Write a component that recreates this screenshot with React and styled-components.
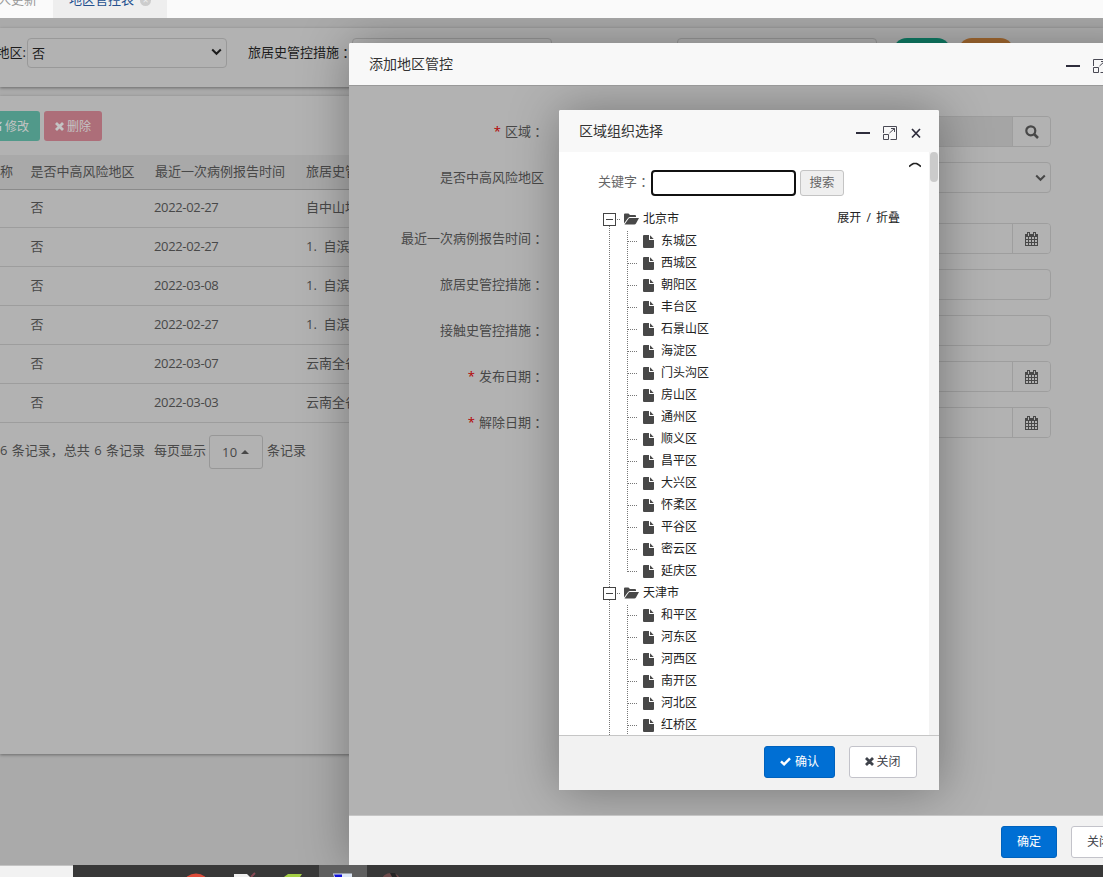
import React from 'react';
import styled, { createGlobalStyle, css } from 'styled-components';

const Global = createGlobalStyle`
  * { box-sizing: border-box; }
  html, body { margin: 0; padding: 0; overflow: hidden; }
  body {
    font-family: "Open Sans", "Noto Sans CJK SC", sans-serif;
    font-size: 13px;
    color: #484848;
  }
`;

const Screen = styled.div`
  width: 1103px;
  height: 877px;
  overflow: hidden;
  display: flex;
  flex-direction: column;
  white-space: nowrap;
`;

/* ---------- tab strip ---------- */
const TabStrip = styled.div`
  height: 18px;
  flex: none;
  display: flex;
  background: #fafafa;
  overflow: hidden;
`;
const Tab = styled.div`
  display: flex;
  align-items: center;
  gap: 6px;
  width: ${(p) => p.$width}px;
  height: 17px;
  padding-left: ${(p) => p.$pad}px;
  padding-bottom: 37px;
  line-height: 16px;
  color: ${(p) => (p.$active ? '#23508e' : '#999')};
  background: ${(p) => (p.$active ? '#eeeeee' : 'transparent')};
`;
const TabName = styled.span`
  margin-top: -3px;
  margin-left: ${(p) => p.$shift || 0}px;
`;
const TabClose = styled.span`
  width: 11px;
  height: 11px;
  border-radius: 50%;
  background: #ccc;
  color: #eee;
  font-size: 10px;
  line-height: 10px;
  text-align: center;
`;

/* ---------- page behind the dialogs ---------- */
const Viewport = styled.div`
  position: relative;
  height: 847px;
  flex: none;
  overflow: hidden;
  background: #aaa;
`;
const Panel = styled.div`
  background: #b2b2b2;
  box-shadow: 0 1px 3px rgba(0, 0, 0, 0.38);
  overflow: hidden;
`;
const SearchPanel = styled(Panel)`
  margin-top: 10px;
  height: 59px;
  display: flex;
  align-items: flex-start;
  padding-top: 10px;
`;
const SearchLabel = styled.span`
  width: ${(p) => p.$width}px;
  padding-right: ${(p) => p.$right || 0}px;
  flex: none;
  display: flex;
  justify-content: flex-end;
  line-height: 29px;
  color: #1c1c1c;
`;
const Field = styled.div`
  width: 200px;
  height: 30px;
  flex: none;
  margin-right: ${(p) => p.$gap || 0}px;
  padding: 0 4px 2px 4px;
  display: flex;
  align-items: center;
  justify-content: space-between;
  border: 1px solid #999;
  border-radius: 4px;
  color: #1c1c1c;
`;
const Pill = styled.div`
  width: ${(p) => p.$width}px;
  height: 28px;
  flex: none;
  margin-right: 7px;
  border-radius: 14px;
  background: ${(p) => p.$color};
`;
const TablePanel = styled(Panel)`
  margin-top: 9px;
  height: 658px;
`;
const Toolbar = styled.div`
  display: flex;
  gap: 4px;
  margin-left: -33px;
  padding-top: 15px;
  height: 59px;
`;
const ToolButton = styled.div`
  width: ${(p) => p.$width}px;
  height: 30px;
  display: flex;
  align-items: center;
  justify-content: flex-end;
  gap: 3px;
  padding-right: 11px;
  border-radius: 3px;
  font-size: 12px;
  color: #c4c4c4;
  background: ${(p) => p.$color};
`;
const Row = styled.div`
  display: grid;
  grid-template-columns: 30px 124px 152px 200px;
  height: ${(p) => (p.$head ? 35 : 39)}px;
  line-height: ${(p) => (p.$head ? 33 : 37)}px;
  border-bottom: 1px solid ${(p) => (p.$head ? '#8a8a8a' : '#9d9d9d')};
  background: ${(p) => (p.$head ? '#a9a9a9' : 'transparent')};
  white-space: pre;
  span:nth-child(2) { padding-left: 0.5px; }
  span:nth-child(3) { letter-spacing: ${(p) => (p.$head ? '0' : '-0.34px')}; padding-left: ${(p) => (p.$head ? 1 : 0)}px; }
`;
const Rows = styled.div`
  margin-top: -1px;
`;
const Pager = styled.div`
  display: flex;
  align-items: flex-start;
  padding-top: 12px;
  line-height: 30px;
`;
const PagerText = styled.span`
  width: ${(p) => p.$width}px;
  word-spacing: ${(p) => p.$spacing || 0}px;
`;
const PageSize = styled.div`
  width: 54px;
  height: 34px;
  margin-right: 4px;
  display: flex;
  align-items: center;
  gap: 4px;
  padding-left: 12px;
  border: 1px solid #979797;
  border-radius: 3px;
  letter-spacing: 0.2px;
  &::after {
    content: '';
    border: 4px solid transparent;
    border-top: 0;
    border-bottom-color: #484848;
  }
`;

/* ---------- dialogs ---------- */
const Dialog = styled.div`
  position: absolute;
  left: ${(p) => p.$x}px;
  top: ${(p) => p.$y}px;
  width: ${(p) => p.$w}px;
  height: ${(p) => p.$h}px;
  display: flex;
  flex-direction: column;
  border-radius: 2px;
  box-shadow: 1px 1px 50px rgba(0, 0, 0, 0.34);
  background: #fff;
`;
const TitleBar = styled.div`
  height: 42px;
  flex: none;
  display: flex;
  align-items: center;
  justify-content: space-between;
  padding: 0 17px 0 20px;
  background: #f8f8f8;
  font-size: 14px;
  line-height: 40px;
  color: #333;
  border-radius: 2px 2px 0 0;
`;
const TitleActions = styled.div`
  display: flex;
  align-items: center;
  padding-top: 4px;
`;
const Footer = styled.div`
  height: ${(p) => p.$h}px;
  flex: none;
  display: flex;
  justify-content: flex-end;
  gap: 14px;
  padding: 10px ${(p) => p.$right}px 0 0;
  background: #f2f2f2;
  border-top: 1px solid #c6c6c6;
`;
const Button = styled.div`
  width: ${(p) => p.$w}px;
  height: 32px;
  flex: none;
  display: flex;
  align-items: center;
  justify-content: center;
  gap: ${(p) => p.$gap || 0}px;
  font-size: 12px;
  line-height: 29px;
  padding-bottom: 1px;
  border-radius: 3px;
  ${(p) =>
    p.$primary
      ? css`background: #006fd4; border: 1px solid #0062bd; color: #fff;`
      : css`background: #fff; border: 1px solid #c3c3ca; color: #3f434b;`}
`;
const FormBody = styled.div`
  position: relative;
  flex: 1;
  overflow: hidden;
  padding-top: 30px;
  background: #b2b2b2;
  border-top: 1px solid #999;
`;
const FormRow = styled.div`
  display: flex;
  height: 31px;
  margin-bottom: ${(p) => p.$after || 15}px;
  line-height: 31px;
`;
const FormLabel = styled.div`
  width: 196px;
  margin-right: 15px;
  padding-right: 1px;
  display: flex;
  justify-content: flex-end;
  i { color: #b20000; font-style: normal; margin-right: 4px; }
`;
const Centered = styled.span`
  font-family: "Noto Sans CJK TC", sans-serif;
`;
const FormInput = styled.div`
  width: 491px;
  display: flex;
  align-items: stretch;
  justify-content: flex-end;
  border: 1px solid #9e9e9e;
  border-radius: 4px;
  overflow: hidden;
  background: ${(p) => (p.$disabled ? '#a5a5a5' : 'transparent')};
`;
const Addon = styled.div`
  width: ${(p) => (p.$plain ? 19 : 38)}px;
  display: flex;
  align-items: center;
  justify-content: center;
  background: ${(p) => (p.$plain ? 'transparent' : '#b2b2b2')};
  border-left: ${(p) => (p.$plain ? 0 : 1)}px solid #9e9e9e;
  padding-right: ${(p) => (p.$plain ? 1 : 0)}px;
`;

/* ---------- region tree ---------- */
const TreeBody = styled.div`
  flex: 1;
  display: flex;
  overflow: hidden;
`;
const TreeMain = styled.div`
  flex: 1;
  overflow: hidden;
`;
const Scrollbar = styled.div`
  width: 10px;
  padding: 0 1px;
  background: #f3f3f3;
  &::before {
    content: '';
    display: block;
    height: 30px;
    border-radius: 4px;
    background: #cbcbcb;
  }
`;
const Keyword = styled.div`
  display: flex;
  align-items: flex-start;
  height: 56px;
  padding: 18px 8px 0 39px;
  line-height: 23px;
  color: #666;
`;
const KeywordInput = styled.div`
  width: 145px;
  height: 26px;
  margin: 0 4px 0 1px;
  border: 2px solid #111;
  border-radius: 4px;
`;
const SearchButton = styled.div`
  width: 44px;
  height: 26px;
  border: 1px solid #c4c4c4;
  border-radius: 3px;
  background: #efefef;
  text-align: center;
  font-size: 12.5px;
`;
const Collapse = styled.svg`
  margin: -9px 0 0 auto;
`;
const dotsV = css`repeating-linear-gradient(to bottom, #777 0 1px, transparent 1px 2px)`;
const dotsH = css`repeating-linear-gradient(to right, #777 0 1px, transparent 1px 2px)`;
const TreeColumns = styled.div`
  display: flex;
  justify-content: space-between;
  padding: 0 29px 0 44px;
  font-size: 12px;
  color: #222;
`;
const Branch = styled.div`
  background: ${dotsV} 6px ${(p) => (p.$first ? 12 : 0)}px / 1px 100% no-repeat;
`;
const BranchHead = styled.div`
  height: 22px;
  display: flex;
  align-items: center;
  line-height: 20px;
`;
const Toggle = styled.div`
  width: 13px;
  height: 13px;
  border: 1px solid #444;
  background: linear-gradient(#444, #444) 2px 5px / 7px 1px no-repeat #fff;
`;
const Dash = styled.div`
  width: ${(p) => p.$w}px;
  height: 1px;
  margin: 0 ${(p) => p.$right}px 0 1px;
  background: ${dotsH};
`;
const BranchIcon = styled.svg`
  margin-right: ${(p) => p.$right}px;
  flex: none;
`;
const Leaf = styled.div`
  height: 22px;
  margin-left: 24px;
  display: flex;
  align-items: center;
  line-height: 20px;
  background: ${dotsV} 0 1px / 1px ${(p) => (p.$last ? '11px' : '100%')} no-repeat;
`;
const Text = styled.span`
  height: 22px;
  line-height: 20px;
  word-spacing: 2px;
`;

/* ---------- taskbar ---------- */
const Taskbar = styled.div`
  height: 12px;
  display: flex;
  background: #383838;
`;
const StatusCorner = styled.div`
  width: 73px;
  background: #f2f2f2;
  border-top: 1px solid #c4c4c4;
`;

const Chevron = ({ color }) => (
  <svg width="11" height="8" viewBox="0 0 11 8"><path d="M1.2 1.500 5.500 5.800 9.800 1.500" fill="none" stroke={color} strokeWidth="2" /></svg>
);
const Cross = () => (
  <svg width="9" height="9" viewBox="0 0 9 9"><path d="M1 1 8 8M8 1 1 8" stroke="currentColor" strokeWidth="2.8" /></svg>
);
const Pencil = () => (
  <svg width="10" height="10" viewBox="0 0 10 10"><path d="M0 2h5M8.500 5v4.500H.5V2M4 6.500 9.500 1" fill="none" stroke="currentColor" strokeWidth="1.5" /></svg>
);
const Check = () => (
  <svg width="11" height="9" viewBox="0 0 11 9"><path d="M1 4.300 4.100 7.300 10 1.400" fill="none" stroke="currentColor" strokeWidth="2.5" /></svg>
);
const Magnifier = () => (
  <svg width="14" height="14" viewBox="0 0 14 14"><circle cx="5.8" cy="5.8" r="4.5" fill="none" stroke="#484848" strokeWidth="2.2" /><path d="m9 9 4 4" stroke="#484848" strokeWidth="2.5" /></svg>
);
const Calendar = () => (
  <svg width="13" height="14" viewBox="0 0 13 14">
    <path d="M0 2h13v12H0z" fill="#484848" />
    <path d="M2 0h3v4H2zM8 0h3v4H8z" fill="#484848" />
    <path d="M3 1h1v3H3zM9 1h1v3H9zM1 5h2v2H1zM4 5h2v2H4zM7 5h2v2H7zM10 5h2v2h-2zM1 8h2v2H1zM4 8h2v2H4zM7 8h2v2H7zM10 8h2v2h-2zM1 11h2v2H1zM4 11h2v2H4zM7 11h2v2H7zM10 11h2v2h-2z" fill="#b2b2b2" />
  </svg>
);
const WindowIcons = () => (
  <svg width="66" height="14" viewBox="0 0 66 14" fill="none" stroke="#4a4a55">
    <path d="M0 7h14" strokeWidth="2" stroke="#2e2d3c" />
    <path d="M27.500 7V.5h13v13h-6M27.500 8.500h5v5h-5zM33.500 7 38.500 2.500M35 2.500h3.500V6" />
    <path d="m56 3 8 8.500M64 3 56 11.500" strokeWidth="1.700" stroke="#2e2d3c" />
  </svg>
);
const Folder = () => (
  <BranchIcon $right={4} width="15" height="12" viewBox="0 0 15 12">
    <path d="M0 10.500V1.500Q0 .5 1 .5h3.500L6 2h5q1 0 1 1v1H5.800Q4.500 4 3.700 5.500Z" fill="#484848" />
    <path d="M.5 11.500 4.200 6.300Q4.800 5 6 5h9l-3 5.500q-.5 1-1.700 1Z" fill="#484848" />
  </BranchIcon>
);
const File = () => (
  <BranchIcon $right={7} width="11" height="13" viewBox="0 0 11 13">
    <path d="M0 1Q0 0 1 0h5v5h5v7q0 1-1 1H1q-1 0-1-1Z" fill="#484848" />
    <path d="M7 .3 10.700 4H7Z" fill="#484848" />
  </BranchIcon>
);

const rows = [
  ['', '否', '2022-02-27', '自中山地区'],
  ['', '否', '2022-02-27', '1.  自滨'],
  ['', '否', '2022-03-08', '1.  自滨'],
  ['', '否', '2022-02-27', '1.  自滨'],
  ['', '否', '2022-03-07', '云南全省'],
  ['', '否', '2022-03-03', '云南全省'],
];
const fields = [
  { label: '区域', colon: true, required: true, disabled: true, addon: 'search' },
  { label: '是否中高风险地区', addon: 'select', after: 30 },
  { label: '最近一次病例报告时间', colon: true, addon: 'date' },
  { label: '旅居史管控措施', colon: true },
  { label: '接触史管控措施', colon: true },
  { label: '发布日期', colon: true, required: true, addon: 'date' },
  { label: '解除日期', colon: true, required: true, addon: 'date' },
];
const regions = [
  { name: '北京市', items: ['东城区', '西城区', '朝阳区', '丰台区', '石景山区', '海淀区', '门头沟区', '房山区', '通州区', '顺义区', '昌平区', '大兴区', '怀柔区', '平谷区', '密云区', '延庆区'] },
  { name: '天津市', items: ['和平区', '河东区', '河西区', '南开区', '河北区', '红桥区'], more: true },
];
const addons = { search: <Magnifier />, select: <Chevron color="#484848" />, date: <Calendar /> };

const RegionPicker = () => (
  <Dialog $x={210} $y={24} $w={380} $h={680}>
    <TitleBar>
      <span>区域组织选择</span>
      <TitleActions><WindowIcons /></TitleActions>
    </TitleBar>
    <TreeBody>
      <TreeMain>
        <Keyword>
          关键字<Centered>：</Centered>
          <KeywordInput />
          <SearchButton>搜索</SearchButton>
          <Collapse width="12" height="7" viewBox="0 0 12 7"><path d="M0 5.500 2.800 3.400 4.500 2.500h3l1.700.9L12 5.500" fill="none" stroke="#222" strokeWidth="1.7" /></Collapse>
        </Keyword>
        <TreeColumns>
          <div>
            {regions.map((r, k) => (
              <Branch key={r.name} $first={k === 0}>
                <BranchHead><Toggle /><Dash $w={4} $right={3} /><Folder />{r.name}</BranchHead>
                {r.items.map((n, i) => (
                  <Leaf key={n} $last={!r.more && i === r.items.length - 1}><Dash $w={10} $right={5} /><File />{n}</Leaf>
                ))}
              </Branch>
            ))}
          </div>
          <Text>展开 / 折叠</Text>
        </TreeColumns>
      </TreeMain>
      <Scrollbar />
    </TreeBody>
    <Footer $h={55} $right={22}>
      <Button $primary $w={71} $gap={4}><Check />确认</Button>
      <Button $w={68} $gap={2}><Cross />关闭</Button>
    </Footer>
  </Dialog>
);

export default function App() {
  return (
    <>
      <Global />
      <Screen>
        <TabStrip>
          <Tab $width={53} $pad={0}><TabName $shift={-2}>人更新</TabName></Tab>
          <Tab $width={114} $pad={16} $active><TabName>地区管控表</TabName><TabClose>×</TabClose></Tab>
        </TabStrip>
        <Viewport>
          <SearchPanel>
            <SearchLabel $width={27} $right={1}>地区:</SearchLabel>
            <Field $gap={21}>否<Chevron color="#1c1c1c" /></Field>
            <SearchLabel $width={104}>旅居史管控措施<Centered>：</Centered></SearchLabel>
            <Field $gap={125} />
            <Field $gap={16} />
            <Pill $width={58} $color="#0f7d66" />
            <Pill $width={56} $color="#a56a31" />
          </SearchPanel>
          <TablePanel>
            <Toolbar>
              <ToolButton $width={73} $color="#51998a"><Pencil />修改</ToolButton>
              <ToolButton $width={58} $color="#ad6e79"><Cross />删除</ToolButton>
            </Toolbar>
            <Row $head>
              <span>称</span><span>是否中高风险地区</span><span>最近一次病例报告时间</span><span>旅居史管控措施</span>
            </Row>
            <Rows>
              {rows.map((r, i) => (
                <Row key={i}>{r.map((c, j) => <span key={j}>{c}</span>)}</Row>
              ))}
            </Rows>
            <Pager>
              <PagerText $width={154} $spacing={1}>6 条记录，总共 6 条记录</PagerText>
              <PagerText $width={55}>每页显示</PagerText>
              <PageSize>10</PageSize>
              <PagerText $width={40}>条记录</PagerText>
            </Pager>
          </TablePanel>
          <Dialog $x={349} $y={25} $w={800} $h={822}>
            <TitleBar>
              <span>添加地区管控</span>
              <TitleActions><WindowIcons /></TitleActions>
            </TitleBar>
            <FormBody>
              {fields.map((f) => (
                <FormRow key={f.label} $after={f.after}>
                  <FormLabel>{f.required && <i>*</i>}{f.label}{f.colon && <Centered>：</Centered>}</FormLabel>
                  <FormInput $disabled={f.disabled}>
                    {f.addon && <Addon $plain={f.addon === 'select'}>{addons[f.addon]}</Addon>}
                  </FormInput>
                </FormRow>
              ))}
              <RegionPicker />
            </FormBody>
            <Footer $h={50} $right={22}>
              <Button $primary $w={56}>确定</Button>
              <Button $w={56}>关闭</Button>
            </Footer>
          </Dialog>
        </Viewport>
        <Taskbar>
          <StatusCorner />
          <svg width="1030" height="12" viewBox="73 0 1030 12">
            <path d="M319 0h48v12h-48z" fill="#5f5f5f" />
            <ellipse cx="196" cy="18" rx="12" ry="9.5" fill="#dd4b39" />
            <path d="M234 9h13l4 4h-17z" fill="#f0f0f0" />
            <path d="m251 12 4-4" stroke="#8a4a55" strokeWidth="2" />
            <path d="m288 9h14l-2 3h-16z" fill="#a4cf45" />
            <path d="M333 8.500h19V12h-18z" fill="#dce6f5" />
            <path d="M334 9.500h8V12h-7z" fill="#1010d8" />
            <ellipse cx="391" cy="15" rx="9" ry="7" fill="#6e4a4a" />
            <path d="M390 8h5l2 4h-5z" fill="#252525" />
          </svg>
        </Taskbar>
      </Screen>
    </>
  );
}
